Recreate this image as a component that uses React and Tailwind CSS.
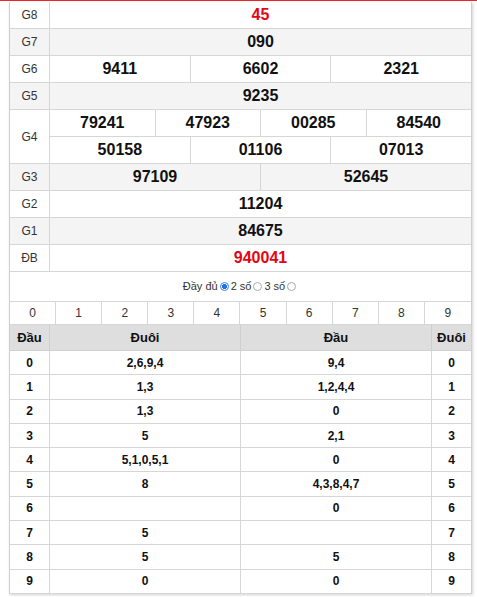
const prizes = [
  { label: 'G8', rows: [['45']], red: true },
  { label: 'G7', rows: [['090']] },
  { label: 'G6', rows: [['9411', '6602', '2321']] },
  { label: 'G5', rows: [['9235']] },
  { label: 'G4', rows: [['79241', '47923', '00285', '84540'], ['50158', '01106', '07013']] },
  { label: 'G3', rows: [['97109', '52645']] },
  { label: 'G2', rows: [['11204']] },
  { label: 'G1', rows: [['84675']] },
  { label: 'ĐB', rows: [['940041']], red: true },
];

const loto = [
  ['0', '2,6,9,4', '9,4', '0'],
  ['1', '1,3', '1,2,4,4', '1'],
  ['2', '1,3', '0', '2'],
  ['3', '5', '2,1', '3'],
  ['4', '5,1,0,5,1', '0', '4'],
  ['5', '8', '4,3,8,4,7', '5'],
  ['6', '', '0', '6'],
  ['7', '5', '', '7'],
  ['8', '5', '5', '8'],
  ['9', '0', '0', '9'],
];

function Radio({ checked }) {
  return (
    <span
      className={
        'inline-block w-[9px] h-[9px] rounded-full border mx-[2px] align-[-1px] ' +
        (checked ? 'border-[#3b82f6] bg-[radial-gradient(circle,#1e73e8_45%,#fff_55%)]' : 'border-[#aaa] bg-white')
      }
    />
  );
}

export default function App() {
  return (
    <div className="w-[477px] h-[597px] bg-white font-['Liberation_Sans',Arial,sans-serif] text-[#222]">
      <div className="h-px bg-[#e8262d]" />
      <div className="mt-px ml-[9px] w-[463px] border-x border-[#cfcfcf] shadow-[1px_1px_3px_rgba(0,0,0,0.18)]">
        {/* bảng giải */}
        {prizes.map((p, i) => (
          <div
            key={p.label}
            className={'flex border-b border-[#d6d6d6] ' + (i % 2 === 1 ? 'bg-[#f4f4f4]' : 'bg-white')}
          >
            <div className="w-[40px] shrink-0 border-r border-[#d6d6d6] flex items-center justify-center text-[12px] text-[#333]">
              {p.label}
            </div>
            <div className="flex-1">
              {p.rows.map((r, j) => (
                <div key={j} className={'flex h-[26px] box-content ' + (j < p.rows.length - 1 ? 'border-b border-[#d6d6d6]' : '')}>
                  {r.map((n, k) => (
                    <div
                      key={k}
                      className={
                        'flex-1 flex items-center justify-center font-bold text-[16px] ' +
                        (k < r.length - 1 ? 'border-r border-[#d6d6d6] ' : '') +
                        (p.red ? 'text-[#e30613]' : 'text-[#111]')
                      }
                    >
                      {n}
                    </div>
                  ))}
                </div>
              ))}
            </div>
          </div>
        ))}

        {/* chọn kiểu hiển thị */}
        <div className="h-[30px] border-b border-[#d6d6d6] flex items-center justify-center text-[11px] text-[#333]">
          Đầy đủ <Radio checked /> 2 số <Radio /> 3 số <Radio />
        </div>

        {/* hàng số 0-9 */}
        <div className="grid grid-cols-10 h-[23px] border-b border-[#d6d6d6]">
          {Array.from({ length: 10 }, (_, d) => (
            <div
              key={d}
              className={'flex items-center justify-center text-[12px] text-[#333] ' + (d < 9 ? 'border-r border-[#d6d6d6]' : '')}
            >
              {d}
            </div>
          ))}
        </div>

        {/* loto đầu đuôi */}
        <div className="flex h-[26px] bg-[#dedede] border-b border-[#d0d0d0] font-bold text-[13px] text-[#111]">
          <div className="w-[40px] border-r border-[#cfcfcf] flex items-center justify-center">Đầu</div>
          <div className="w-[191px] border-r border-[#cfcfcf] flex items-center justify-center">Đuôi</div>
          <div className="w-[191px] border-r border-[#cfcfcf] flex items-center justify-center">Đầu</div>
          <div className="flex-1 flex items-center justify-center">Đuôi</div>
        </div>
        {loto.map((r) => (
          <div key={r[0]} className="flex h-[24.3px] border-b border-[#d6d6d6] font-bold text-[12px] text-[#111]">
            <div className="w-[40px] border-r border-[#d6d6d6] flex items-center justify-center">{r[0]}</div>
            <div className="w-[191px] border-r border-[#d6d6d6] flex items-center justify-center">{r[1]}</div>
            <div className="w-[191px] border-r border-[#d6d6d6] flex items-center justify-center">{r[2]}</div>
            <div className="flex-1 flex items-center justify-center">{r[3]}</div>
          </div>
        ))}
      </div>
    </div>
  );
}
